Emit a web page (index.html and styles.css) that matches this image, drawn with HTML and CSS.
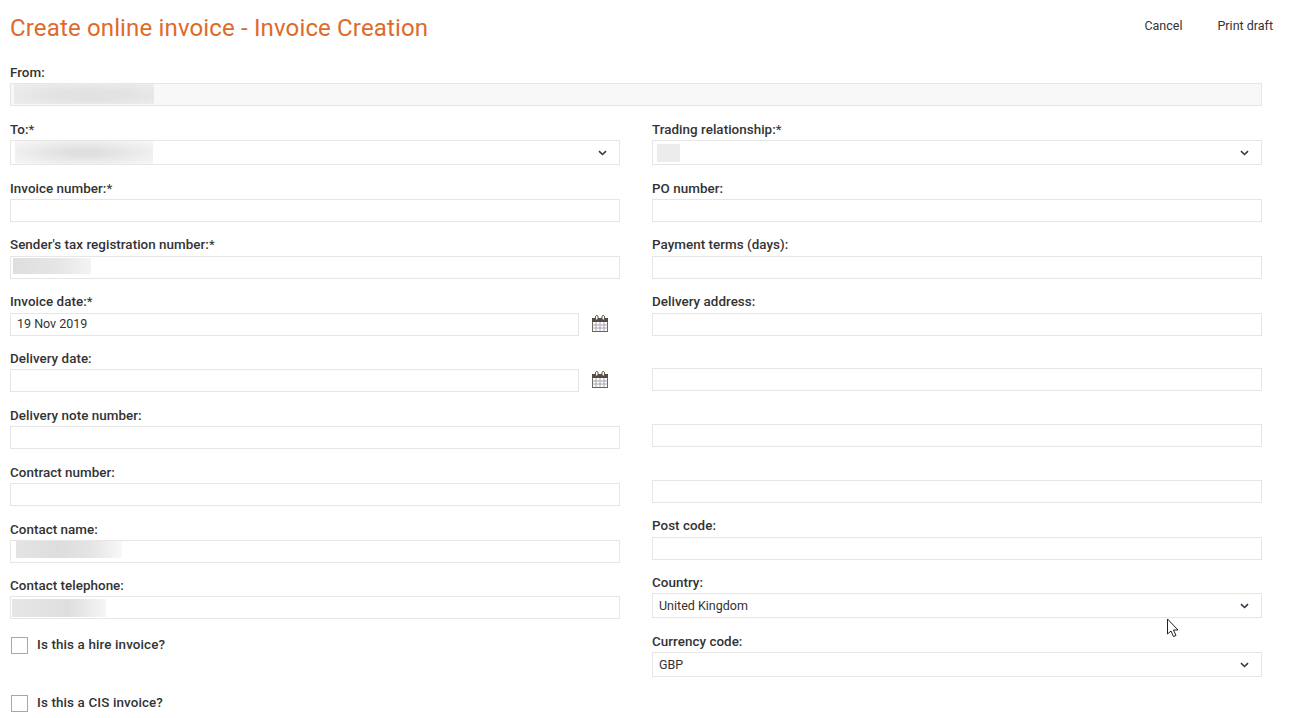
FILE: index.html
```html
<!DOCTYPE html>
<html lang="en">
<head>
<meta charset="utf-8">
<title>Create online invoice - Invoice Creation</title>
<link rel="stylesheet" href="styles.css">
</head>
<body>
<svg class="defs" width="0" height="0" aria-hidden="true">
  <symbol id="chev" viewBox="0 0 9 6"><path d="M1 1.200 4.500 4.500 8 1.200" fill="none" stroke="#2f3a4a" stroke-width="1.600"/></symbol>
  <symbol id="cal" viewBox="0 0 17 17">
    <rect x="0.500" y="3.500" width="15" height="13" fill="#fff" stroke="#6e6558"/>
    <rect x="0" y="3" width="16" height="4" fill="#524c47"/>
    <path d="M0.500 10h15M0.500 13h15M4 7v9M8 7v9M12 7v9" stroke="#a9a4b4" stroke-width="1" fill="none"/>
    <rect x="3.500" y="0.500" width="2.500" height="4.500" rx="1.200" fill="#fff" stroke="#5b5048"/>
    <rect x="10" y="0.500" width="2.500" height="4.500" rx="1.200" fill="#fff" stroke="#5b5048"/>
  </symbol>
</svg>
<header class="topbar">
  <h1 class="title">Create online invoice - Invoice Creation</h1>
  <nav class="actions"><a class="action">Cancel</a><a class="action">Print draft</a></nav>
</header>
<main class="form">
  <div class="field from">
    <label class="label">From:</label>
    <div class="input readonly"><span class="blur blur-from"></span></div>
  </div>
  <div class="columns">
    <div class="col">
      <div class="field"><label class="label">To:<span class="req">*</span></label>
        <div class="input select"><span class="blur blur-to"></span><svg class="chev"><use href="#chev"/></svg></div></div>
      <div class="field"><label class="label">Invoice number:<span class="req">*</span></label><div class="input"></div></div>
      <div class="field"><label class="label raised">Sender's tax registration number:<span class="req">*</span></label>
        <div class="input"><span class="blur blur-tax"></span></div></div>
      <div class="field short"><label class="label raised">Invoice date:<span class="req">*</span></label>
        <div class="date-row"><div class="input date">19 Nov 2019</div><svg class="cal"><use href="#cal"/></svg></div></div>
      <div class="field"><label class="label">Delivery date:</label>
        <div class="date-row"><div class="input date"></div><svg class="cal"><use href="#cal"/></svg></div></div>
      <div class="field"><label class="label">Delivery note number:</label><div class="input"></div></div>
      <div class="field"><label class="label">Contract number:</label><div class="input"></div></div>
      <div class="field short"><label class="label">Contact name:</label>
        <div class="input"><span class="blur blur-name"></span></div></div>
      <div class="field check-gap"><label class="label">Contact telephone:</label>
        <div class="input"><span class="blur blur-tel"></span></div></div>
      <div class="check"><span class="box"></span><span class="check-label">Is this a hire invoice?</span></div>
      <div class="check last"><span class="box"></span><span class="check-label">Is this a CIS invoice?</span></div>
    </div>
    <div class="col">
      <div class="field"><label class="label">Trading relationship:<span class="req">*</span></label>
        <div class="input select"><span class="blur blur-trade"></span><svg class="chev"><use href="#chev"/></svg></div></div>
      <div class="field"><label class="label">PO number:</label><div class="input"></div></div>
      <div class="field"><label class="label raised">Payment terms (days):</label><div class="input"></div></div>
      <div class="field tight"><label class="label raised">Delivery address:</label><div class="input"></div></div>
      <div class="field short address-line"><div class="input"></div></div>
      <div class="field short address-line"><div class="input"></div></div>
      <div class="field address-line"><div class="input"></div></div>
      <div class="field short"><label class="label raised">Post code:</label><div class="input"></div></div>
      <div class="field"><label class="label">Country:</label>
        <div class="input select">United Kingdom<svg class="chev"><use href="#chev"/></svg></div></div>
      <div class="field last"><label class="label">Currency code:</label>
        <div class="input select">GBP<svg class="chev"><use href="#chev"/></svg></div></div>
    </div>
  </div>
</main>
<svg class="cursor" width="14" height="20" viewBox="0 0 14 20"><path d="M1.500 1v15l3.500-3 2.500 5.500 2.500-1-2.500-5.500h4.500z" fill="#fff" stroke="#222" stroke-width="1"/></svg>
</body>
</html>
```
FILE: styles.css
```css
* { box-sizing: border-box; }
html, body { margin: 0; padding: 0; }
body {
  width: 1300px;
  height: 718px;
  overflow: hidden;
  position: relative;
  background: #fff;
  color: #333;
  font-family: Roboto, "Liberation Sans", sans-serif;
  font-size: 12.5px;
}
.defs { position: absolute; }
.topbar {
  height: 64px;
  padding: 14px 27px 0 10px;
  display: flex;
  justify-content: space-between;
  align-items: flex-start;
}
.title {
  margin: 0;
  font-size: 24px;
  line-height: 28px;
  font-weight: 400;
  color: #de6a2c;
  letter-spacing: 0.15px;
}
.actions { display: flex; gap: 35px; padding-top: 4px; }
.action { font-size: 12.5px; line-height: 16px; color: #333; }
.form { padding: 0 38px 0 10px; }
.columns { display: grid; grid-template-columns: 610px 610px; column-gap: 32px; }
.col { display: flex; flex-direction: column; }
.field { margin-bottom: 15px; }
.field.short { margin-bottom: 14px; }
.field.tight { margin-bottom: 13px; }
.field.last { margin-bottom: 0; }
.field.check-gap { margin-bottom: 18px; }
.address-line { padding-top: 19px; }
.label {
  display: block;
  height: 16px;
  margin-bottom: 3px;
  font-size: 13.4px;
  line-height: 17px;
  font-weight: 500;
  letter-spacing: 0.04px;
  color: #333;
  white-space: nowrap;
}
.label.raised { line-height: 15px; }
.req { font-weight: 400; }
.input {
  position: relative;
  height: 23px;
  border: 1px solid #e6e6e6;
  background: #fff;
  padding: 0 6px;
  line-height: 20px;
  font-size: 12.5px;
  color: #333;
}
.readonly { background: #f8f8f8; }
.select { height: 25px; line-height: 24px; }
.date-row { display: flex; align-items: center; }
.date { width: 569px; }
.cal { width: 17px; height: 17px; margin: -3px 0 0 13px; }
.chev { position: absolute; right: 12px; top: 9px; width: 9px; height: 6px; }
.blur { position: absolute; display: block; }
.blur-from { left: 3px; top: 0; width: 140px; height: 20px; background: radial-gradient(ellipse at 55% 55%, #e2e2e2 30%, #efefef 100%); }
.blur-to { left: 4px; top: 0; width: 138px; height: 23px; background: radial-gradient(ellipse at 50% 50%, #dfdfdf 15%, #f8f8f8 100%); }
.blur-tax { left: 2px; top: 1px; width: 78px; height: 16px; background: linear-gradient(90deg, #dedede 0%, #e6e6e6 60%, #f4f4f4 100%); }
.blur-name { left: 5px; top: 0; width: 106px; height: 17px; background: linear-gradient(90deg, #e4e4e4 0%, #dddddd 40%, #e4e4e4 70%, #f8f8f8 100%); }
.blur-tel { left: 1px; top: 2px; width: 94px; height: 18px; background: linear-gradient(90deg, #e6e6e6 0%, #dedede 60%, #f6f6f6 100%); }
.blur-trade { left: 4px; top: 3px; width: 23px; height: 18px; background: #ececec; }
.check { display: flex; align-items: center; height: 17px; margin-bottom: 41px; }
.check.last { margin-bottom: 0; }
.box { width: 17px; height: 17px; border: 1px solid #a3a8a8; margin-left: 1px; background: #fff; }
.check-label { margin-left: 9px; font-weight: 500; font-size: 13.4px; line-height: 16px; letter-spacing: 0.13px; color: #333; position: relative; top: -1px; }
.cursor { position: absolute; left: 1166px; top: 618px; }
```
